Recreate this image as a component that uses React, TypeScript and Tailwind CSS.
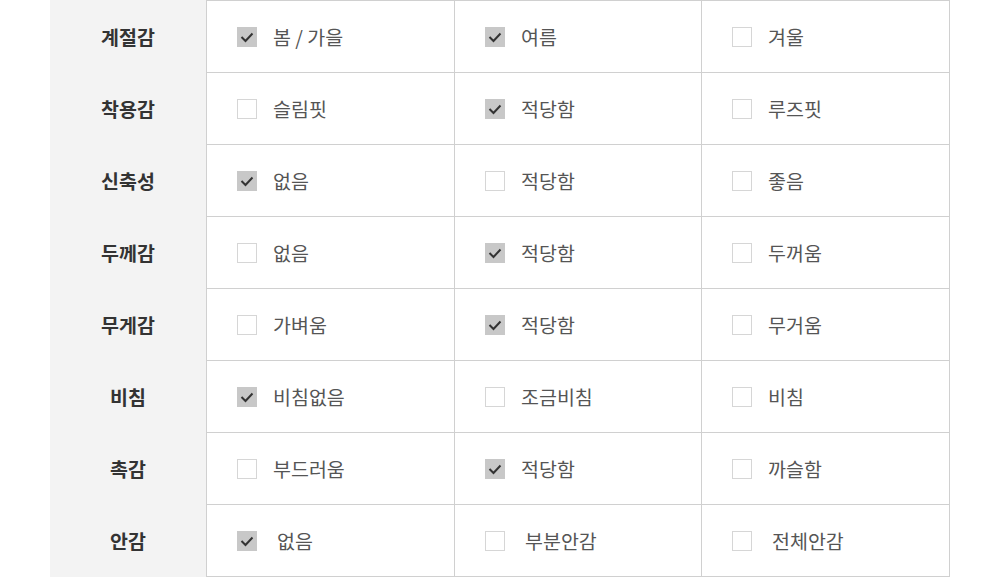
import React from "react";

type Row = { label: string; opts: [string, boolean][]; wide?: boolean };

const rows: Row[] = [
  { label: "계절감", opts: [["봄 / 가을", true], ["여름", true], ["겨울", false]] },
  { label: "착용감", opts: [["슬림핏", false], ["적당함", true], ["루즈핏", false]] },
  { label: "신축성", opts: [["없음", true], ["적당함", false], ["좋음", false]] },
  { label: "두께감", opts: [["없음", false], ["적당함", true], ["두꺼움", false]] },
  { label: "무게감", opts: [["가벼움", false], ["적당함", true], ["무거움", false]] },
  { label: "비침", opts: [["비침없음", true], ["조금비침", false], ["비침", false]] },
  { label: "촉감", opts: [["부드러움", false], ["적당함", true], ["까슬함", false]] },
  { label: "안감", opts: [["없음", true], ["부분안감", false], ["전체안감", false]], wide: true },
];

function Box({ checked }: { checked: boolean }) {
  if (checked) {
    return (
      <span className="flex h-[20px] w-[20px] shrink-0 items-center justify-center bg-[#c8c8c8]">
        <svg width="20" height="20" viewBox="0 0 20 20">
          <polyline points="4.5,10 8.5,14 15.5,6.5" fill="none" stroke="#333" strokeWidth="2" />
        </svg>
      </span>
    );
  }
  return <span className="h-[20px] w-[20px] shrink-0 border border-[#d6d6d6] bg-white" />;
}

export default function App() {
  const widths = ["w-[248px]", "w-[247px]", "w-[249px] border-r"];
  return (
    <div
      className="h-[577px] w-[1000px] overflow-hidden bg-white"
      style={{ fontFamily: '"Noto Sans CJK KR", "Noto Sans", sans-serif' }}
    >
      <div className="ml-[50px] flex w-[900px] flex-col">
        {rows.map((r, i) => {
          const h = i === 0 ? "h-[73px] border-t" : "h-[72px]";
          return (
            <div key={r.label} className="flex">
              <div
                className={`flex w-[156px] items-center justify-center bg-[#f3f3f3] text-[19.5px] font-bold leading-none text-[#333] ${i === 0 ? "h-[73px]" : "h-[72px]"}`}
              >
                {r.label}
              </div>
              {r.opts.map(([t, c], j) => (
                <div
                  key={j}
                  className={`flex items-center border-b border-l border-[#d0d0d0] pl-[30px] ${h} ${widths[j]}`}
                >
                  <Box checked={c} />
                  <span
                    className={`${r.wide ? "ml-[20px]" : "ml-[16px]"} text-[19.5px] leading-none text-[#555]`}
                  >
                    {t}
                  </span>
                </div>
              ))}
            </div>
          );
        })}
      </div>
    </div>
  );
}
